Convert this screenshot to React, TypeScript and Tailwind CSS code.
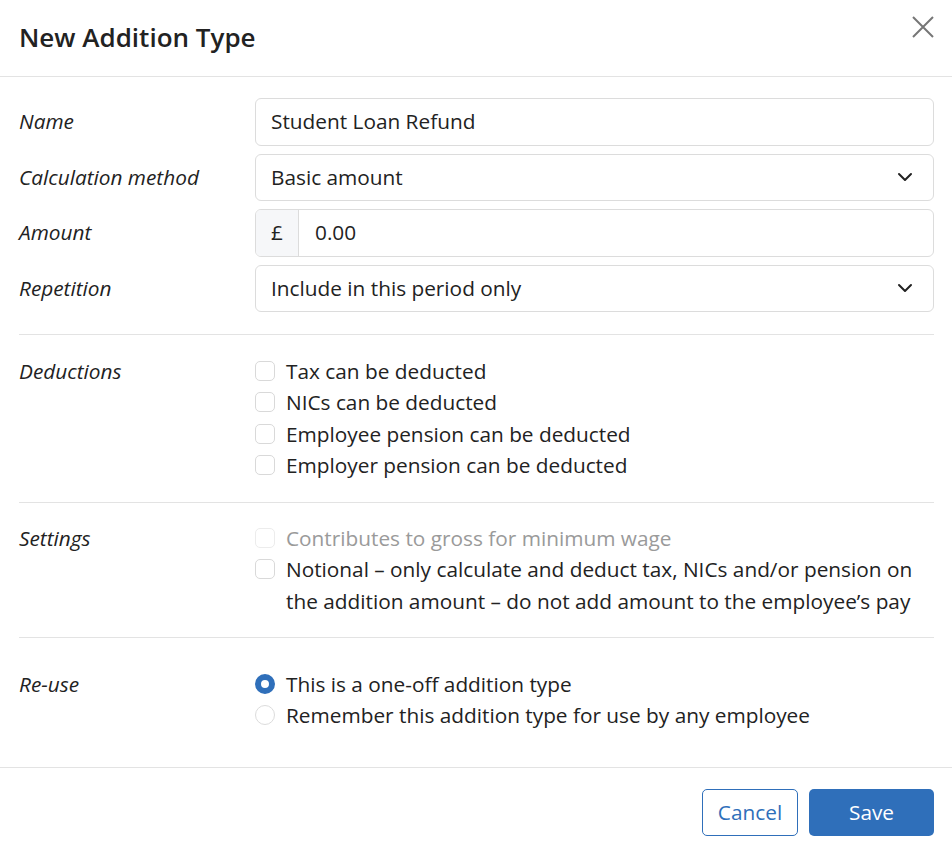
function Chevron() {
  return (
    <svg width="16" height="10" viewBox="0 0 16 10" fill="none" stroke="#222" strokeWidth="2" strokeLinecap="round" strokeLinejoin="round">
      <path d="M2 2l6 6 6-6" />
    </svg>
  );
}

function Checkbox({ label, disabled }: { label: string; disabled?: boolean }) {
  return (
    <label className="flex items-start gap-[11px]">
      <span
        className={`mt-[5px] w-[20px] h-[20px] shrink-0 rounded-[5px] border ${
          disabled ? "border-[#ececec]" : "border-[#d9d9d9]"
        } bg-white`}
      />
      <span className={disabled ? "text-[#9a9a9a]" : "text-[#222]"}>{label}</span>
    </label>
  );
}

function Radio({ label, checked }: { label: string; checked?: boolean }) {
  return (
    <label className="flex items-start gap-[11px]">
      <span
        className={`mt-[5px] w-[20px] h-[20px] shrink-0 rounded-full ${
          checked ? "border-[6px] border-[#2f6fba] bg-white" : "border border-[#dcdcdc] bg-white"
        }`}
      />
      <span className="text-[#222]">{label}</span>
    </label>
  );
}

function FieldRow({ label, children }: { label: string; children: React.ReactNode }) {
  return (
    <div className="grid grid-cols-[236px_1fr] items-center">
      <div className="italic">{label}</div>
      {children}
    </div>
  );
}

function Section({ label, children }: { label: string; children: React.ReactNode }) {
  return (
    <div className="grid grid-cols-[236px_1fr]">
      <div className="italic">{label}</div>
      <div className="flex flex-col">{children}</div>
    </div>
  );
}

export default function App() {
  return (
    <div
      className="w-[952px] h-[856px] bg-white text-[#222] text-[20.8px] leading-[31.3px] flex flex-col"
      style={{ fontFamily: '"Open Sans", "Noto Sans", sans-serif' }}
    >
      <div className="h-[77px] border-b border-[#e3e3e3] pl-[19px] pr-[17px] flex items-center justify-between shrink-0">
        <h1 className="text-[26px] font-semibold text-[#222] leading-none -mt-[2px]">New Addition Type</h1>
        <svg width="24" height="24" viewBox="0 0 24 24" fill="none" stroke="#767676" strokeWidth="2" className="self-start mt-[15px]">
          <path d="M2 2l20 20M22 2L2 22" />
        </svg>
      </div>

      <div className="flex-1 pl-[19px] pr-[18px]">
        <div className="pt-[21px] pb-[22px] border-b border-[#e3e3e3] flex flex-col gap-[8px]">
          <FieldRow label="Name">
            <div className="h-[47.5px] border border-[#dcdcdc] rounded-[6px] flex items-center px-[15px]">
              Student Loan Refund
            </div>
          </FieldRow>
          <FieldRow label="Calculation method">
            <div className="h-[47.5px] border border-[#dcdcdc] rounded-[6px] flex items-center justify-between pl-[15px] pr-[20px]">
              <span>Basic amount</span>
              <Chevron />
            </div>
          </FieldRow>
          <FieldRow label="Amount">
            <div className="h-[47.5px] border border-[#dcdcdc] rounded-[6px] flex items-stretch overflow-hidden">
              <div className="w-[43px] bg-[#f6f7f9] border-r border-[#dcdcdc] flex items-center justify-center">£</div>
              <div className="flex items-center pl-[16px]">0.00</div>
            </div>
          </FieldRow>
          <FieldRow label="Repetition">
            <div className="h-[47.5px] border border-[#dcdcdc] rounded-[6px] flex items-center justify-between pl-[15px] pr-[20px]">
              <span>Include in this period only</span>
              <Chevron />
            </div>
          </FieldRow>
        </div>

        <div className="pt-[21px] pb-[21px] border-b border-[#e3e3e3]">
          <Section label="Deductions">
            <Checkbox label="Tax can be deducted" />
            <Checkbox label="NICs can be deducted" />
            <Checkbox label="Employee pension can be deducted" />
            <Checkbox label="Employer pension can be deducted" />
          </Section>
        </div>

        <div className="pt-[20px] pb-[20px] border-b border-[#e3e3e3]">
          <Section label="Settings">
            <Checkbox label="Contributes to gross for minimum wage" disabled />
            <Checkbox label="Notional – only calculate and deduct tax, NICs and/or pension on the addition amount – do not add amount to the employee’s pay" />
          </Section>
        </div>

        <div className="pt-[31px]">
          <Section label="Re-use">
            <Radio label="This is a one-off addition type" checked />
            <Radio label="Remember this addition type for use by any employee" />
          </Section>
        </div>
      </div>

      <div className="h-[89px] shrink-0 border-t border-[#e3e3e3] flex items-start justify-end gap-[11px] pt-[21px] pr-[18px]">
        <button className="w-[96px] h-[47px] rounded-[5px] border border-[#2f6fba] text-[#2f6fba] bg-white">Cancel</button>
        <button className="w-[125px] h-[47px] rounded-[5px] bg-[#2f6fba] text-white">Save</button>
      </div>
    </div>
  );
}
